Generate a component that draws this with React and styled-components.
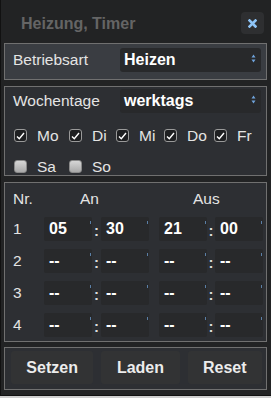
import React from "react";
import styled, { createGlobalStyle } from "styled-components";

const Global = createGlobalStyle`
  html, body {
    margin: 0;
    padding: 0;
    background: #cfcfcf;
    font-family: "Liberation Sans", Arial, sans-serif;
  }
`;

const Dialog = styled.div`
  width: 271px;
  height: 396px;
  box-sizing: border-box;
  background: #222324;
  border-left: 1px solid #111;
  border-bottom: 1px solid #111;
  display: flex;
  flex-direction: column;
`;

const Header = styled.div`
  height: 43px;
  display: flex;
  align-items: center;
  justify-content: space-between;
  padding: 5px 7px 0 20px;
  box-sizing: border-box;
`;

const Title = styled.h1`
  margin: 0;
  font-size: 16px;
  font-weight: bold;
  color: #656565;
`;

const CloseButton = styled.button`
  width: 23px;
  height: 22px;
  margin-top: -2px;
  border: none;
  border-radius: 4px;
  background: #2e2f31;
  display: flex;
  align-items: center;
  justify-content: center;
  padding: 0;
`;

const Section = styled.div`
  margin: 0 4px ${(p) => p.$gap ?? 6}px 3px;
  border: 1px solid #707070;
  background: ${(p) => p.$bg || "#2d2f33"};
  box-sizing: border-box;
  height: ${(p) => p.$h}px;
`;

const FieldRow = styled.div`
  display: flex;
  align-items: center;
  justify-content: space-between;
  padding: ${(p) => p.$pad || "4px 5px 0 8px"};
`;

const Label = styled.span`
  font-size: 15.5px;
  color: #e4e4e4;
`;

const Select = styled.div`
  position: relative;
  width: 141px;
  height: 24px;
  box-sizing: border-box;
  background: #28292b;
  border-radius: 3px;
  padding-left: 4px;
  display: flex;
  align-items: center;
  font-size: 16px;
  font-weight: bold;
  color: #fff;
`;

const Arrows = styled.svg`
  position: absolute;
  right: 5px;
  top: 6px;
`;

const Days = styled.div`
  display: flex;
  flex-wrap: wrap;
  padding: 14px 0 0 9px;
  row-gap: 14px;
`;

const Day = styled.label`
  display: flex;
  align-items: center;
  width: ${(p) => p.$w}px;
  font-size: 15.5px;
  color: #e4e4e4;
  height: 17px;
`;

const Box = styled.span`
  width: 13px;
  height: 13px;
  margin-right: 10px;
  border-radius: 3px;
  box-sizing: border-box;
  display: flex;
  align-items: center;
  justify-content: center;
  background: ${(p) => (p.$on ? "#1e1f21" : "linear-gradient(#d6d6d6, #a9a9a9)")};
  border: 1px solid ${(p) => (p.$on ? "#9a9a9a" : "#8a8a8a")};
`;

const Grid = styled.div`
  display: grid;
  grid-template-columns: 31px 48px 9px 48px 10px 48px 8px 48px;
  grid-template-rows: 21px;
  grid-auto-rows: 24px;
  row-gap: 8px;
  align-items: center;
  padding: 5px 0 0 8px;
`;

const Head = styled.span`
  font-size: 15.5px;
  color: #e4e4e4;
  grid-column: ${(p) => p.$col};
  justify-self: start;
  padding-left: ${(p) => p.$pl || 0}px;
`;

const Num = styled.span`
  font-size: 15.5px;
  color: #e4e4e4;
`;

const TimeInput = styled.div`
  position: relative;
  height: 24px;
  background: #28292b;
  border-radius: 2px;
  padding-left: 5px;
  display: flex;
  align-items: center;
  font-size: 16px;
  font-weight: bold;
  color: #fff;
  &::after {
    content: "";
    position: absolute;
    right: 1px;
    top: 4px;
    width: 1px;
    height: 3px;
    background: #5b7fa6;
  }
`;

const Colon = styled.span`
  font-size: 15px;
  font-weight: bold;
  color: #ddd;
  text-align: center;
  padding-top: 3px;
`;

const Buttons = styled.div`
  display: flex;
  gap: 8px;
  padding: 3px 4px 0 6px;
`;

const Button = styled.button`
  width: ${(p) => p.$w}px;
  height: 33px;
  border: none;
  border-radius: 3px;
  background: #323334;
  color: #ececec;
  font-family: "Liberation Sans", Arial, sans-serif;
  font-size: 16px;
  font-weight: bold;
  padding: 0;
`;

const Check = () => (
  <svg width="9" height="8" viewBox="0 0 9 8">
    <path d="M1 4.5 L3.3 6.8 L8 1" fill="none" stroke="#fff" strokeWidth="1.4" />
  </svg>
);

const CloseIcon = () => (
  <svg width="9" height="9" viewBox="0 0 9 9">
    <path d="M1.5 1.5 L7.5 7.5 M7.5 1.5 L1.5 7.5" stroke="#8ec4f6" strokeWidth="2.6" strokeLinecap="square" />
  </svg>
);

const days = [
  { n: "Mo", on: true, w: 55 },
  { n: "Di", on: true, w: 47 },
  { n: "Mi", on: true, w: 48 },
  { n: "Do", on: true, w: 50 },
  { n: "Fr", on: true, w: 50 },
  { n: "Sa", on: false, w: 55 },
  { n: "So", on: false, w: 50 },
];

const rows = [
  ["05", "30", "21", "00"],
  ["--", "--", "--", "--"],
  ["--", "--", "--", "--"],
  ["--", "--", "--", "--"],
];

const SelectBox = ({ value }) => (
  <Select>
    {value}
    <Arrows width="5" height="9" viewBox="0 0 5 9">
      <path d="M0.5 3.5 L2.5 0.5 L4.5 3.5 Z M0.5 5.5 L2.5 8.5 L4.5 5.5 Z" fill="#6fa3dc" />
    </Arrows>
  </Select>
);

export default function App() {
  return (
    <>
      <Global />
      <Dialog>
        <Header>
          <Title>Heizung, Timer</Title>
          <CloseButton>
            <CloseIcon />
          </CloseButton>
        </Header>
        <Section $bg="#3a3d42" $h={37}>
          <FieldRow>
            <Label>Betriebsart</Label>
            <SelectBox value="Heizen" />
          </FieldRow>
        </Section>
        <Section $h={90}>
          <FieldRow $pad="2px 5px 0 8px">
            <Label>Wochentage</Label>
            <SelectBox value="werktags" />
          </FieldRow>
          <Days>
            {days.map((d) => (
              <Day key={d.n} $w={d.w}>
                <Box $on={d.on}>{d.on && <Check />}</Box>
                {d.n}
              </Day>
            ))}
          </Days>
        </Section>
        <Section $h={160} $gap={5}>
          <Grid>
            <Head $col="1">Nr.</Head>
            <Head $col="2 / 5" $pl={36}>An</Head>
            <Head $col="6 / 9" $pl={34}>Aus</Head>
            {rows.map((r, i) => (
              <React.Fragment key={i}>
                <Num>{i + 1}</Num>
                <TimeInput>{r[0]}</TimeInput>
                <Colon>:</Colon>
                <TimeInput>{r[1]}</TimeInput>
                <span />
                <TimeInput>{r[2]}</TimeInput>
                <Colon>:</Colon>
                <TimeInput>{r[3]}</TimeInput>
              </React.Fragment>
            ))}
          </Grid>
        </Section>
        <Section $h={43} $gap={0}>
          <Buttons>
            <Button $w={83}>Setzen</Button>
            <Button $w={79}>Laden</Button>
            <Button $w={75}>Reset</Button>
          </Buttons>
        </Section>
      </Dialog>
    </>
  );
}
